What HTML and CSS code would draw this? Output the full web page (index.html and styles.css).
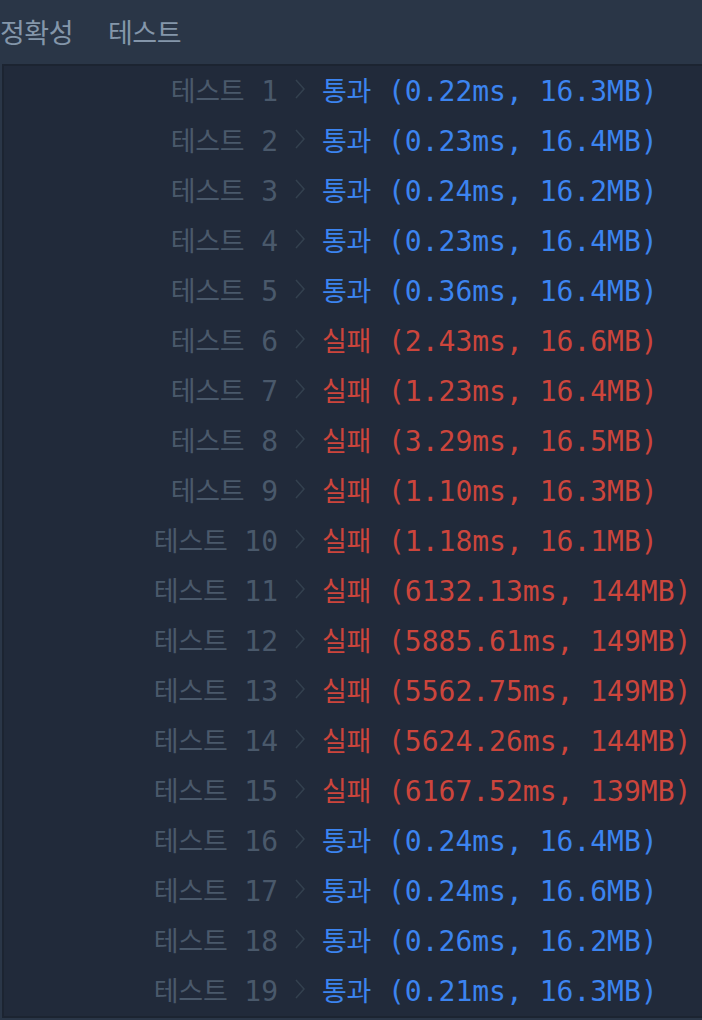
FILE: index.html
```html
<!DOCTYPE html>
<html lang="ko">

<head>
    <meta charset="UTF-8" />
    <meta name="viewport" content="width=device-width, initial-scale=1.0" />
    <title>채점 결과</title>
    <link rel="stylesheet" href="styles.css">
</head>

<body>
    <div class="result-tabs">
        <span class="tab">정확성</span>
        <span class="tab">테스트</span>
    </div>

    <div class="result-panel">
        <div class="row"><span class="label"><span class="ko">테스트</span> 1</span><svg class="chev" viewBox="0 0 10 20"><polyline points="1,1 9,10 1,19" /></svg><span class="res pass"><span class="ko">통과</span> (0.22ms, 16.3MB)</span></div>
        <div class="row"><span class="label"><span class="ko">테스트</span> 2</span><svg class="chev" viewBox="0 0 10 20"><polyline points="1,1 9,10 1,19" /></svg><span class="res pass"><span class="ko">통과</span> (0.23ms, 16.4MB)</span></div>
        <div class="row"><span class="label"><span class="ko">테스트</span> 3</span><svg class="chev" viewBox="0 0 10 20"><polyline points="1,1 9,10 1,19" /></svg><span class="res pass"><span class="ko">통과</span> (0.24ms, 16.2MB)</span></div>
        <div class="row"><span class="label"><span class="ko">테스트</span> 4</span><svg class="chev" viewBox="0 0 10 20"><polyline points="1,1 9,10 1,19" /></svg><span class="res pass"><span class="ko">통과</span> (0.23ms, 16.4MB)</span></div>
        <div class="row"><span class="label"><span class="ko">테스트</span> 5</span><svg class="chev" viewBox="0 0 10 20"><polyline points="1,1 9,10 1,19" /></svg><span class="res pass"><span class="ko">통과</span> (0.36ms, 16.4MB)</span></div>
        <div class="row"><span class="label"><span class="ko">테스트</span> 6</span><svg class="chev" viewBox="0 0 10 20"><polyline points="1,1 9,10 1,19" /></svg><span class="res fail"><span class="ko">실패</span> (2.43ms, 16.6MB)</span></div>
        <div class="row"><span class="label"><span class="ko">테스트</span> 7</span><svg class="chev" viewBox="0 0 10 20"><polyline points="1,1 9,10 1,19" /></svg><span class="res fail"><span class="ko">실패</span> (1.23ms, 16.4MB)</span></div>
        <div class="row"><span class="label"><span class="ko">테스트</span> 8</span><svg class="chev" viewBox="0 0 10 20"><polyline points="1,1 9,10 1,19" /></svg><span class="res fail"><span class="ko">실패</span> (3.29ms, 16.5MB)</span></div>
        <div class="row"><span class="label"><span class="ko">테스트</span> 9</span><svg class="chev" viewBox="0 0 10 20"><polyline points="1,1 9,10 1,19" /></svg><span class="res fail"><span class="ko">실패</span> (1.10ms, 16.3MB)</span></div>
        <div class="row"><span class="label"><span class="ko">테스트</span> 10</span><svg class="chev" viewBox="0 0 10 20"><polyline points="1,1 9,10 1,19" /></svg><span class="res fail"><span class="ko">실패</span> (1.18ms, 16.1MB)</span></div>
        <div class="row"><span class="label"><span class="ko">테스트</span> 11</span><svg class="chev" viewBox="0 0 10 20"><polyline points="1,1 9,10 1,19" /></svg><span class="res fail"><span class="ko">실패</span> (6132.13ms, 144MB)</span></div>
        <div class="row"><span class="label"><span class="ko">테스트</span> 12</span><svg class="chev" viewBox="0 0 10 20"><polyline points="1,1 9,10 1,19" /></svg><span class="res fail"><span class="ko">실패</span> (5885.61ms, 149MB)</span></div>
        <div class="row"><span class="label"><span class="ko">테스트</span> 13</span><svg class="chev" viewBox="0 0 10 20"><polyline points="1,1 9,10 1,19" /></svg><span class="res fail"><span class="ko">실패</span> (5562.75ms, 149MB)</span></div>
        <div class="row"><span class="label"><span class="ko">테스트</span> 14</span><svg class="chev" viewBox="0 0 10 20"><polyline points="1,1 9,10 1,19" /></svg><span class="res fail"><span class="ko">실패</span> (5624.26ms, 144MB)</span></div>
        <div class="row"><span class="label"><span class="ko">테스트</span> 15</span><svg class="chev" viewBox="0 0 10 20"><polyline points="1,1 9,10 1,19" /></svg><span class="res fail"><span class="ko">실패</span> (6167.52ms, 139MB)</span></div>
        <div class="row"><span class="label"><span class="ko">테스트</span> 16</span><svg class="chev" viewBox="0 0 10 20"><polyline points="1,1 9,10 1,19" /></svg><span class="res pass"><span class="ko">통과</span> (0.24ms, 16.4MB)</span></div>
        <div class="row"><span class="label"><span class="ko">테스트</span> 17</span><svg class="chev" viewBox="0 0 10 20"><polyline points="1,1 9,10 1,19" /></svg><span class="res pass"><span class="ko">통과</span> (0.24ms, 16.6MB)</span></div>
        <div class="row"><span class="label"><span class="ko">테스트</span> 18</span><svg class="chev" viewBox="0 0 10 20"><polyline points="1,1 9,10 1,19" /></svg><span class="res pass"><span class="ko">통과</span> (0.26ms, 16.2MB)</span></div>
        <div class="row"><span class="label"><span class="ko">테스트</span> 19</span><svg class="chev" viewBox="0 0 10 20"><polyline points="1,1 9,10 1,19" /></svg><span class="res pass"><span class="ko">통과</span> (0.21ms, 16.3MB)</span></div>
    </div>
</body>

</html>
```

FILE: styles.css
```css
* {
    box-sizing: border-box;
    margin: 0;
    padding: 0;
}

body {
    background: #2a3647;
    font-family: 'Noto Sans CJK KR', sans-serif;
    overflow: hidden;
}

.result-tabs {
    height: 64px;
    display: flex;
    align-items: center;
    gap: 35px;
    padding-left: 0;
    padding-bottom: 2px;
}

.tab {
    font-size: 27px;
    color: #8496aa;
    letter-spacing: -0.5px;
}

.result-panel {
    margin-left: 2px;
    border-top: 2px solid #1c2431;
    border-left: 2px solid #1c2431;
    border-bottom: 2px solid #1c2431;
    background: #212a3a;
}

.row {
    height: 50px;
    display: flex;
    align-items: center;
    padding-bottom: 4px;
    font-family: 'DejaVu Sans Mono', 'Noto Sans CJK KR', monospace;
    font-size: 28px;
    white-space: pre;
}

.ko {
    font-family: 'Noto Sans CJK KR', sans-serif;
    font-size: 27px;
    letter-spacing: -0.3px;
}

.label {
    width: 274px;
    text-align: right;
    color: #4a596b;
}

.chev {
    width: 10px;
    height: 20px;
    margin: 0 17px 0 17px;
}

.chev polyline {
    fill: none;
    stroke: #34414f;
    stroke-width: 1.5;
}

.pass {
    color: #3c84f0;
}

.fail {
    color: #cc453c;
}
```
